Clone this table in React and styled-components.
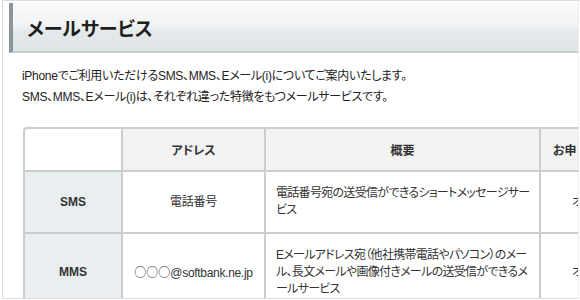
import React from 'react';
import styled, { createGlobalStyle } from 'styled-components';

const Global = createGlobalStyle`
  * {
    box-sizing: border-box;
  }
  body {
    margin: 0;
    background: #ffffff;
    font-family: "Liberation Sans", "Noto Sans CJK JP", sans-serif;
    font-feature-settings: "palt";
  }
`;

const Frame = styled.div`
  margin-left: 2px;
  width: 577px;
  height: 299px;
  border: 1px solid #dddddd;
  border-right-color: #eeeeee;
  padding: 2px 0 0 6px;
  overflow: hidden;
  background: #ffffff;
`;

const TitleBar = styled.h1`
  margin: 0;
  height: 50px;
  display: flex;
  align-items: center;
  padding-left: 14px;
  border-left: 4px solid #8c959b;
  border-bottom: 2px solid #c9cbcc;
  background: linear-gradient(#f9fafa 0%, #f1f3f4 45%, #e3e8ea 60%, #e0e5e7 100%);
  font-size: 19px;
  font-weight: bold;
  color: #1e1e1e;
`;

const Intro = styled.p`
  margin: 13px 0 0 13px;
  font-size: 12px;
  line-height: 21px;
  color: #222222;
  letter-spacing: -0.3px;
`;

const Table = styled.table`
  margin: 19px 0 0 14px;
  border-collapse: separate;
  border-spacing: 0;
  table-layout: fixed;
  width: 638px;
  font-size: 12px;
  color: #333333;
`;

const Row = styled.tr`
  height: ${(p) => p.$h}px;
`;

const HeadCell = styled.th`
  background: ${(p) => (p.$blank ? '#ffffff' : '#f2f2f2')};
  border-top: 2px solid #cccccc;
  border-right: 2px solid #cccccc;
  border-bottom: 2px solid #cccccc;
  font-weight: bold;
  text-align: ${(p) => (p.$left ? 'left' : 'center')};
  padding: ${(p) => (p.$left ? '0 0 0 12px' : '0')};
  &:first-child {
    border-left: 2px solid #cccccc;
    border-top-left-radius: 4px;
  }
`;

const SideCell = styled.th`
  background: #e9eef1;
  border-left: 2px solid #cccccc;
  border-right: 2px solid #cccccc;
  border-bottom: 2px solid #cccccc;
  font-weight: bold;
  text-align: center;
  color: #333333;
`;

const Cell = styled.td`
  border-right: 2px solid #cccccc;
  border-bottom: 2px solid #cccccc;
  text-align: ${(p) => (p.$center ? 'center' : 'left')};
  padding: ${(p) => (p.$center ? '0' : '0 8px 0 10px')};
  line-height: 17px;
  letter-spacing: ${(p) => (p.$center ? '-0.3px' : '-0.7px')};
  vertical-align: middle;
  white-space: ${(p) => (p.$nowrap ? 'nowrap' : 'normal')};
`;

const Circles = styled.span`
  font-family: "Noto Sans CJK JP", sans-serif;
  font-size: 12px;
  letter-spacing: 0;
`;

const rows = [
  {
    name: 'SMS',
    address: '電話番号',
    summary: '電話番号宛の送受信ができるショートメッセージサービス',
    apply: 'オプション不要',
    h: 62,
  },
  {
    name: 'MMS',
    address: (
      <>
        <Circles>○○○</Circles>@softbank.ne.jp
      </>
    ),
    summary:
      'Eメールアドレス宛（他社携帯電話やパソコン）のメール、長文メールや画像付きメールの送受信ができるメールサービス',
    apply: 'オプション不要',
    h: 78,
  },
];

export default function App() {
  return (
    <>
      <Global />
      <Frame>
        <TitleBar>メールサービス</TitleBar>
        <Intro>
          iPhoneでご利用いただけるSMS、MMS、Eメール(i)についてご案内いたします。
          <br />
          SMS、MMS、Eメール(i)は、それぞれ違った特徴をもつメールサービスです。
        </Intro>
        <Table>
          <colgroup>
            <col style={{ width: 100 }} />
            <col style={{ width: 143 }} />
            <col style={{ width: 275 }} />
            <col style={{ width: 120 }} />
          </colgroup>
          <thead>
            <Row $h={45}>
              <HeadCell $blank />
              <HeadCell>アドレス</HeadCell>
              <HeadCell>概要</HeadCell>
              <HeadCell $left>お申し込み</HeadCell>
            </Row>
          </thead>
          <tbody>
            {rows.map((r) => (
              <Row key={r.name} $h={r.h}>
                <SideCell>{r.name}</SideCell>
                <Cell $center>{r.address}</Cell>
                <Cell>{r.summary}</Cell>
                <Cell $nowrap style={{ paddingLeft: 31 }}>
                  {r.apply}
                </Cell>
              </Row>
            ))}
          </tbody>
        </Table>
      </Frame>
    </>
  );
}
